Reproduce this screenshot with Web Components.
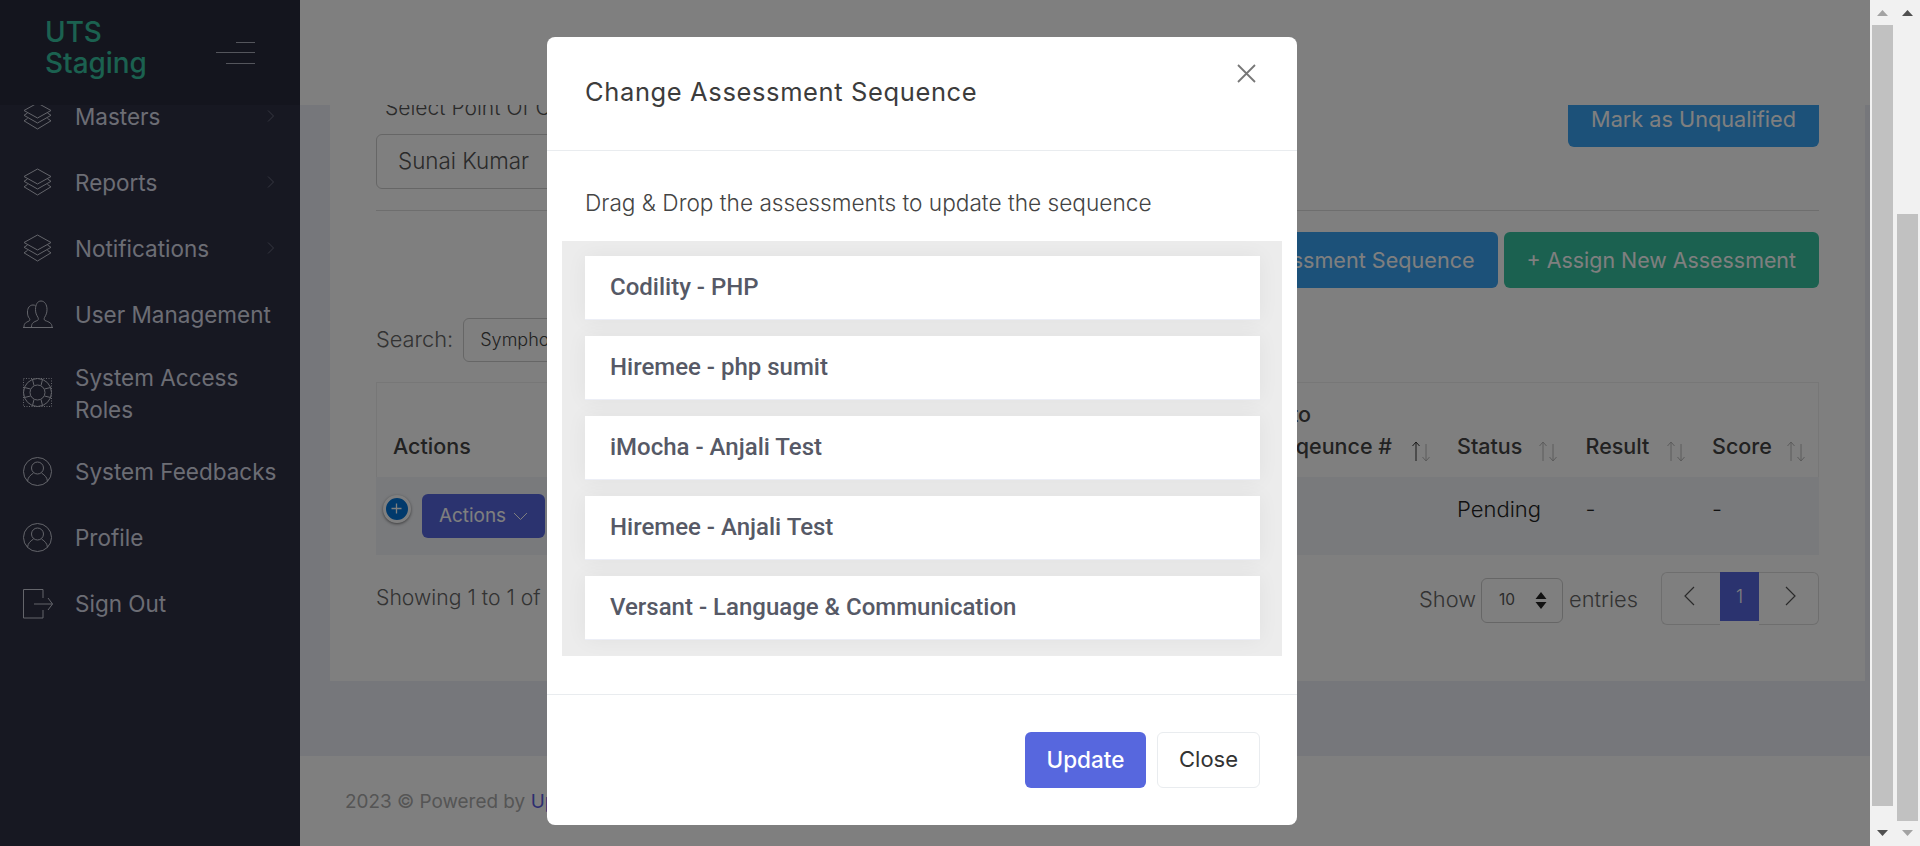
<!doctype html>
<html lang="en"><head><meta charset="utf-8"><title>Change Assessment Sequence</title>
<style>
html,body{margin:0;height:846px;overflow:hidden;font-family:Inter,"Noto Sans",sans-serif;background:#fff}
</style></head><body>
<app-shell>
  <side-bar slot="side">
    <nav-item icon="layers" arrow>Masters</nav-item>
    <nav-item icon="layers" arrow>Reports</nav-item>
    <nav-item icon="layers" arrow>Notifications</nav-item>
    <nav-item icon="users">User Management</nav-item>
    <nav-item icon="life">System Access<br>Roles</nav-item>
    <nav-item icon="user">System Feedbacks</nav-item>
    <nav-item icon="user">Profile</nav-item>
    <nav-item icon="logout">Sign Out</nav-item>
  </side-bar>
  <main-area slot="main">
    <candidate-card></candidate-card>
  </main-area>
  <assess-modal slot="modal" heading="Change Assessment Sequence">
    <seq-item>Codility - PHP</seq-item>
    <seq-item>Hiremee - php sumit</seq-item>
    <seq-item>iMocha - Anjali Test</seq-item>
    <seq-item>Hiremee - Anjali Test</seq-item>
    <seq-item>Versant - Language &amp; Communication</seq-item>
  </assess-modal>
  <scroll-bar slot="bars" top="25" height="781" up="#a3a3a3" down="#505050"></scroll-bar>
  <scroll-bar slot="bars" top="214" height="607" up="#505050" down="#a3a3a3"></scroll-bar>
</app-shell>
<script>
const def=(name,html,setup)=>customElements.define(name,class extends HTMLElement{
  constructor(){super();const r=this.attachShadow({mode:'open'});r.innerHTML=html;}
  connectedCallback(){if(setup)setup.call(this,this.shadowRoot);}
});
const ICONS={
 layers:'<path d="M14.500 1 28 8.500 14.500 16 1 8.500Z"/><path d="M4.500 11 1 13.300 14.500 21 28 13.300 24.500 11"/><path d="M4.500 16.500 1 18.800 14.500 27 28 18.800 24.500 16.500"/>',
 users:'<path d="M0 27.500H30"/><path d="M8.500 27c0-4 2-5 6-6.500 1-.5 1-2 .5-3C13.500 15 12.500 13 12.500 9.500 12.500 4.500 14.500 1 18 1s6 3.500 6 8.500c0 3.500-1 5.500-2.500 8-.5 1-.5 2.500.5 3 4 1.500 7 2.500 7 6.500"/><path d="M1 27c0-4 2-4.500 5-6 1-.5 1-1.500.5-2.500C5 17 4.500 15 4.500 12c0-4 2-7 5.500-7 1 0 2 .2 2.500.8"/>',
 life:'<circle cx="14.500" cy="14.500" r="14"/><circle cx="14.500" cy="14.500" r="7.500"/><path d="M11 7.500 9.500 1.500M18 7.500 19.500 1.500M11 21.500 9.500 27.500M18 21.500 19.500 27.500M7.500 11 1.500 9.500M7.500 18 1.500 19.500M21.500 11 27.500 9.500M21.500 18 27.500 19.500"/><rect x=".5" y=".5" width="28" height="28" stroke-dasharray="1 1.500"/>',
 user:'<circle cx="14.500" cy="14.500" r="14"/><circle cx="14.500" cy="11" r="6"/><path d="M4.500 24.500C5 20 7 18.500 10.500 16M24.500 24.500C24 20 22 18.500 18.500 16"/>',
 logout:'<path d="M20 9V.5H.5V29H20V21"/><path d="M11 15H29.500M25 9l4.500 6-4.500 6"/>'
};

def('app-shell',`<style>
:host{display:flex;width:1920px;height:846px;overflow:hidden}
.page{position:relative;width:1870px;height:846px;display:flex;flex:none;overflow:hidden}
.backdrop{position:absolute;inset:0;background:rgba(0,0,0,.5);z-index:5}
.layer{position:absolute;inset:0;z-index:6;padding:37px 0 0 547px;box-sizing:border-box}
.bars{display:flex;width:50px;flex:none;background:#f1f1f1}
</style>
<div class="page"><slot name="side"></slot><slot name="main"></slot><div class="backdrop"></div><div class="layer"><slot name="modal"></slot></div></div>
<div class="bars"><slot name="bars"></slot></div>`);

def('scroll-bar',`<style>
:host{display:flex;flex-direction:column;width:25px;height:846px}
svg{display:block;width:25px;height:25px;flex:none}
.thumb{width:21px;margin-left:2px;background:#c1c1c1}
.sp{flex:1}
</style>
<svg viewBox="0 0 25 25"><path class="u" d="M12.500 10 18 16H7Z"/></svg><div class="thumb"></div><div class="sp"></div>
<svg viewBox="0 0 25 25"><path class="d" d="M12.500 15 18 9H7Z"/></svg>`,function(r){
  const t=+this.getAttribute('top'),h=+this.getAttribute('height');
  const th=r.querySelector('.thumb');th.style.marginTop=(t-25)+'px';th.style.height=h+'px';
  r.querySelector('.u').setAttribute('fill',this.getAttribute('up'));
  r.querySelector('.d').setAttribute('fill',this.getAttribute('down'));
});

def('side-bar',`<style>
:host{display:flex;flex-direction:column;width:300px;height:846px;flex:none;background:#2e3044;color:#d8dae8;overflow:hidden}
.head{height:105px;flex:none;box-sizing:border-box;background:#292b3d;display:flex;align-items:center;justify-content:space-between;padding:0 45px 0 45px;position:relative;z-index:1}
.logo{font-size:27.900px;font-weight:500;line-height:31px;color:#36c2a0;margin-top:-10px}
.burger{display:flex;flex-direction:column;align-items:flex-end;gap:9.500px}
.burger i{display:block;height:1px;background:#a8aab8}
nav{flex:1;overflow:hidden}
.in{margin-top:-22px}
</style>
<div class="head"><div class="logo">UTS<br>Staging</div><div class="burger"><i style="width:19px"></i><i style="width:39px"></i><i style="width:29px"></i></div></div>
<nav><div class="in"><slot></slot></div></nav>`);

def('nav-item',`<style>
:host{display:flex;align-items:center;min-height:66px;box-sizing:border-box;padding:13.500px 26px 13.500px 23px;font-size:22.500px;line-height:32px;white-space:nowrap;position:relative}
svg.i{width:29px;height:29px;flex:none;margin-right:23px;fill:none;stroke:#c8cad6;stroke-width:1;overflow:visible}
.t{flex:1;padding-top:1px;margin-bottom:-1px}
svg.c{width:7px;height:12px;flex:none;fill:none;stroke:#6c6e80;stroke-width:1}
</style><svg class="i" viewBox="0 0 29 29"></svg><div class="t"><slot></slot></div><svg class="c" viewBox="0 0 7 12"><path d="M1 .5 6.500 6 1 11.500"/></svg>`,function(r){
  r.querySelector('.i').innerHTML=ICONS[this.getAttribute('icon')];
  if(!this.hasAttribute('arrow'))r.querySelector('.c').style.display='none';
});

def('main-area',`<style>
:host{display:flex;flex-direction:column;flex:1;min-width:0;height:846px;background:#eceef6}
header{height:105px;flex:none;background:#fff;position:relative;z-index:2}
.content{flex:1;min-height:0;padding:0 5px 0 30px}
footer{height:90px;flex:none;box-sizing:border-box;background:#fff;padding-left:45px;display:flex;align-items:center;font-size:18.900px;font-weight:400;color:#aaa;white-space:nowrap}
a{color:#5b5ce0;margin-left:.3em}
</style><header></header><div class="content"><slot></slot></div><footer>2023 © Powered by <a>Uplers</a></footer>`);

def('ui-btn',`<style>
:host{display:inline-flex;align-items:center;justify-content:center;box-sizing:border-box;height:var(--h,56px);padding:0 var(--p,23px);border-radius:6px;background:var(--bg,#5767de);color:#fff;font-size:var(--fs,21.600px);font-weight:400;white-space:nowrap}
</style><slot></slot>`);

def('sort-arrows',`<style>
:host{display:inline-flex;flex:none}
svg{width:20px;height:21px;fill:none;stroke-width:1}
.u{stroke:var(--u,#b8b8b8)}.d{stroke:#b8b8b8}
</style><svg viewBox="0 0 20 21"><path class="u" d="M5 1V20M1.500 5 5 1l3.500 4"/><path class="d" d="M15 3V20M11.500 16 15 20l3.500-4"/></svg>`);

def('data-table',`<style>
:host{display:grid;grid-template-columns:264px 799px 128.500px 126.500px 125px;color:#444}
.th{height:95px;box-sizing:border-box;border-top:1px solid #eee;padding-bottom:15px;display:flex;align-items:flex-end;font-size:21.500px;font-weight:500;line-height:32px}
.th.first{border-left:1px solid #eee;padding-left:16px}
.th.last{border-right:1px solid #eee}
.th span{flex:1}
.seq{justify-content:flex-end;padding-right:8px}
.seq span{flex:none;margin-right:19px;white-space:nowrap}
.seq b{font-weight:500;margin-left:-13px}
.td{height:78px;box-sizing:border-box;background:#f2f4f8;font-size:22px;font-weight:300;line-height:32px;padding-top:16px;color:#222}
.a{display:flex;align-items:flex-start;padding:0 0 0 7px}
.plus{width:28px;height:28px;box-sizing:border-box;border-radius:50%;margin-top:18px;margin-right:11px;background:#0275d8;border:3.500px solid #fff;box-shadow:0 1px 3px rgba(0,0,0,.5);display:flex;flex:none}
.plus svg{width:21px;height:21px;stroke:#fff;fill:none;stroke-width:1.300}
ui-btn{--h:44px;--p:18px;--fs:18.900px;margin-top:17px;width:123px;padding:0}
ui-btn svg{width:15px;height:9px;margin-left:7px;fill:none;stroke:#fff;stroke-width:1}
.st{padding-left:18px}
</style>
<div class="th first"><span>Actions</span></div>
<div class="th seq"><span><b>Go to</b><br>Seqeunce #</span><sort-arrows style="--u:#333"></sort-arrows></div>
<div class="th st" style="padding-right:10px"><span>Status</span><sort-arrows></sort-arrows></div>
<div class="th st" style="padding-right:8px"><span>Result</span><sort-arrows></sort-arrows></div>
<div class="th st last" style="padding-right:12px"><span>Score</span><sort-arrows></sort-arrows></div>
<div class="td a"><div class="plus"><svg viewBox="0 0 21 21"><path d="M10.500 5.500V15.500M5.500 10.500H15.500"/></svg></div><ui-btn>Actions<svg viewBox="0 0 15 9"><path d="M1 1l6.500 6.500L14 1"/></svg></ui-btn></div>
<div class="td"></div>
<div class="td st">Pending</div><div class="td st">-</div><div class="td st">-</div>`);

def('page-nav',`<style>
:host{display:flex;align-items:flex-start;height:53px;width:158px;box-sizing:border-box}
.b{box-sizing:border-box;height:53px;border:1px solid #ddd;display:flex;align-items:center;justify-content:center;flex:none}
.p{width:59px;border-radius:6px 0 0 6px;border-right:0}.n{width:60px;border-radius:0 6px 6px 0;border-left:0}
.on{width:39px;height:49px;background:#5767de;color:#fff;font-size:18px;font-weight:300;display:flex;align-items:center;justify-content:center;flex:none;box-sizing:border-box}
svg{width:12px;height:20px;fill:none;stroke:#555;stroke-width:1.200;margin-bottom:6px}
.p svg{margin-right:5px}.n svg{margin-left:5px}
</style><div class="b p"><svg viewBox="0 0 12 20"><path d="M11 1 2 10l9 9"/></svg></div><div class="on">1</div><div class="b n"><svg viewBox="0 0 12 20"><path d="M1 1l9 9-9 9"/></svg></div>`);

def('candidate-card',`<style>
:host{display:block;background:#fff;margin-top:-30px;padding:16px 46px 56px;color:#666;font-size:21.800px;font-weight:300;line-height:32px}
.top{display:flex;justify-content:space-between;align-items:flex-start}
label{display:block;height:34px;line-height:34px;margin:0 0 9px 9px;white-space:nowrap;font-size:21px;color:#555}
.inp{box-sizing:border-box;border:1px solid #ccc;border-radius:6px;display:flex;align-items:center;white-space:nowrap}
.poc{width:420px;height:55px;padding:0 0 2px 21px;font-size:22.400px;color:#555}
hr{border:0;border-top:1px solid #ddd;margin:21px 0}
.acts{display:flex;justify-content:flex-end;gap:6px}
.search{display:flex;align-items:center;margin-top:30px;height:44px}
.search>span{padding-bottom:2px}
.search .inp{margin-left:10px;width:340px;height:44px;padding-left:16px;font-size:18px;font-weight:300;color:#444}
data-table{margin-top:20px}
.bot{display:flex;align-items:center;margin-top:17px;height:53px;justify-content:space-between}
.bot>span{font-size:21.200px;padding-bottom:4px}
.r{display:flex;align-items:center}
.sel{width:82px;height:45px;margin:3px 6px 0 5px;padding:0 15px 0 17px;justify-content:space-between;font-size:15.500px;font-weight:400;color:#555}
.sel svg{width:12px;height:19px;fill:#222}
page-nav{margin-left:23px}
</style>
<div class="top"><div><label>Select Point Of Contact</label><div class="inp poc">Sunai Kumar</div></div><ui-btn style="--bg:#38a2f2;--fs:21.700px">Mark as Unqualified</ui-btn></div>
<hr>
<div class="acts"><ui-btn style="--bg:#38a2f2">Change Assessment Sequence</ui-btn><ui-btn style="--bg:#36c2a0;--fs:21.400px">+ Assign New Assessment</ui-btn></div>
<div class="search"><span>Search:</span><div class="inp">Symphony</div></div>
<data-table></data-table>
<div class="bot"><span>Showing 1 to 1 of 1 entries</span><div class="r"><span>Show</span><div class="inp sel">10<svg viewBox="0 0 12 19"><path d="M6 1l5.500 7H.5ZM6 18 .5 11h11Z"/></svg></div><span>entries</span><page-nav></page-nav></div></div>`);

def('assess-modal',`<style>
:host{display:block;width:750px;height:788px;background:#fff;border-radius:8px;overflow:hidden;color:#3c3c3c}
.h{height:114px;box-sizing:border-box;border-bottom:1px solid #e9ecef;padding:37px 41px 0 38px;display:flex;justify-content:space-between;align-items:flex-start}
h2{margin:0;font-size:25.500px;letter-spacing:.62px;font-weight:400;line-height:36px}
svg{width:19px;height:19px;stroke:#777;stroke-width:1.800;fill:none;margin-top:-10px}
.b{height:544px;box-sizing:border-box;border-bottom:1px solid #e9ecef;padding-top:35px}
p{margin:0 38px 21px;font-size:22.650px;font-weight:300;line-height:34px;color:#444;white-space:nowrap}
.box{margin:0 15px;background:#ececec;padding:15px 22px 16px 23px;display:flex;flex-direction:column;gap:16px}
.f{height:130px;box-sizing:border-box;padding:37px 37px 0;display:flex;justify-content:flex-end;gap:11px}
ui-btn{--fs:22.500px;font-weight:500;width:121px;padding:0 0 2px}
.c{box-sizing:border-box;width:103px;height:56px;border:1px solid #e9ecef;border-radius:6px;padding-bottom:2px;display:flex;align-items:center;justify-content:center;font-size:22px;color:#333}
</style>
<div class="h"><h2></h2><svg viewBox="0 0 19 19"><path d="M1 1 18 18M18 1 1 18"/></svg></div>
<div class="b"><p>Drag &amp; Drop the assessments to update the sequence</p><div class="box"><slot></slot></div></div>
<div class="f"><ui-btn>Update</ui-btn><div class="c">Close</div></div>`,function(r){r.querySelector('h2').textContent=this.getAttribute('heading');});

def('seq-item',`<style>
:host{display:flex;align-items:center;height:64px;box-sizing:border-box;background:#fff;padding:0 25px 1px;border-bottom:1px solid #eceef6;box-shadow:0 0 20px rgba(0,0,0,.05);font-family:Roboto,sans-serif;font-weight:500;font-size:24px;color:#565966;white-space:nowrap}
</style><slot></slot>`);
</script>
</body></html>
